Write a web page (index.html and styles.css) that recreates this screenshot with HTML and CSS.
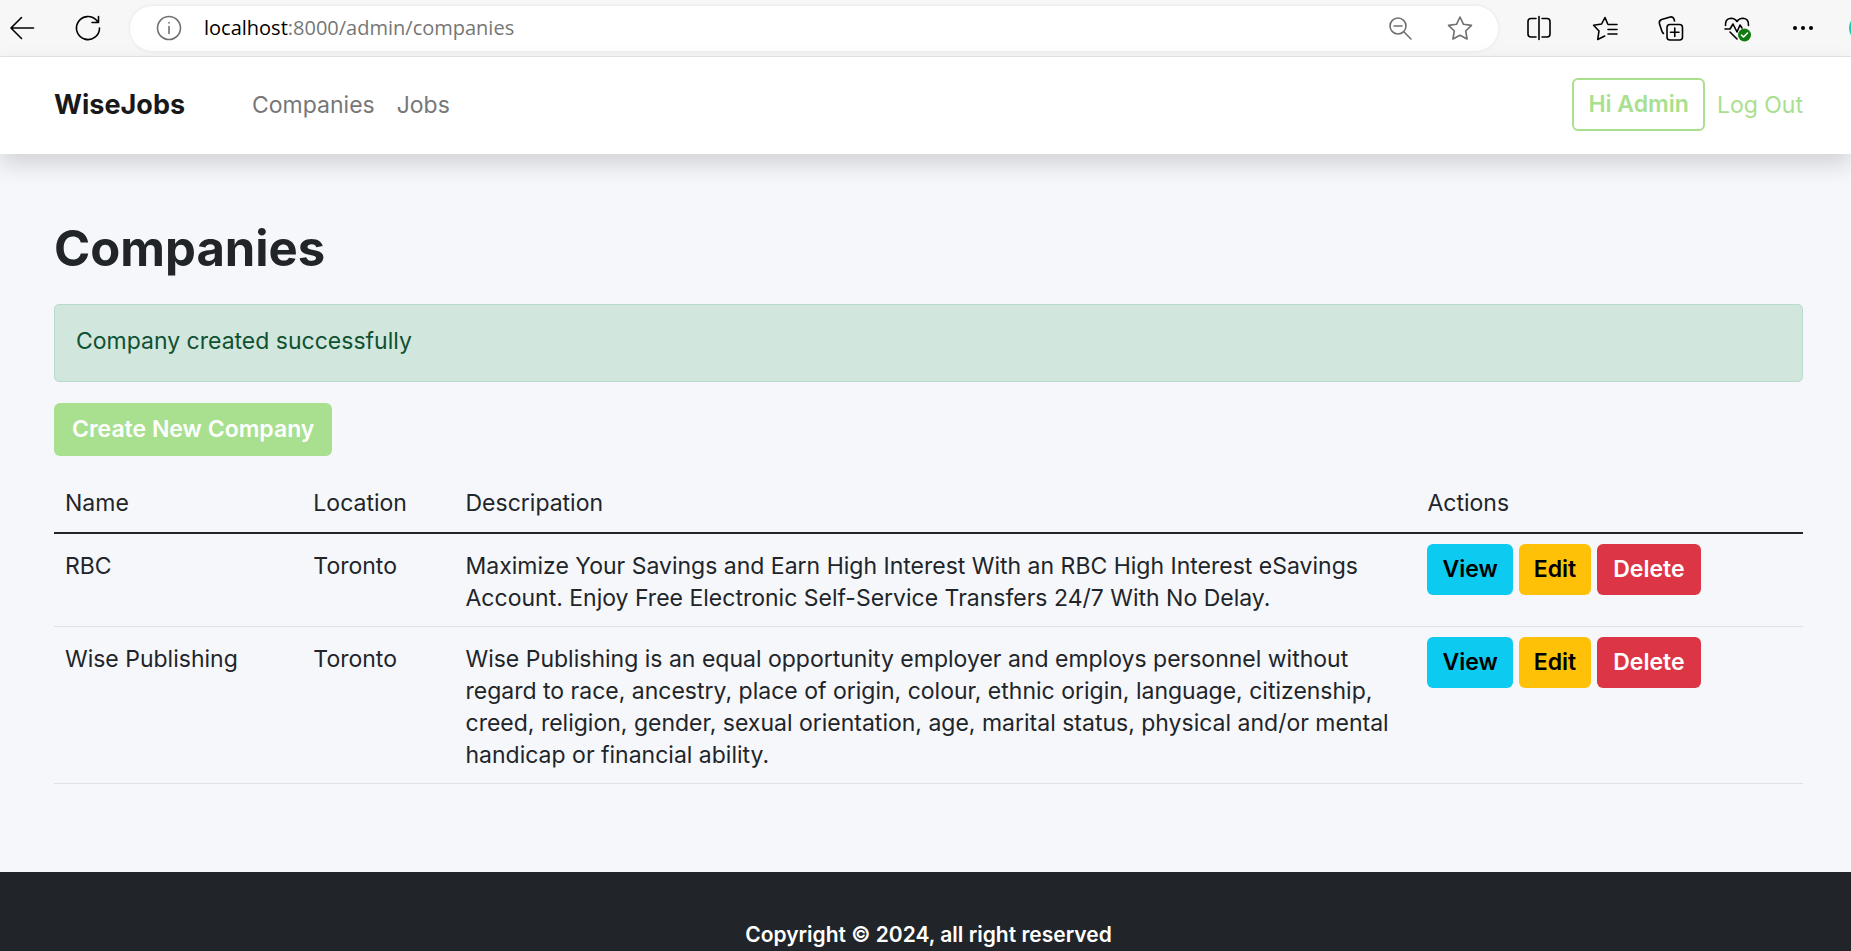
FILE: index.html
```html
<!DOCTYPE html>
<html lang="en">
<head>
<meta charset="utf-8">
<title>WiseJobs - Companies</title>
<link rel="stylesheet" href="styles.css">
</head>
<body>
<div class="browser-bar">
  <button class="icon-button" aria-label="Back"><svg class="icon" viewBox="0 0 28 28"><path d="M25.500 14H3M13.500 3.500L3 14l10.500 10.500"/></svg></button>
  <button class="icon-button icon-reload" aria-label="Reload"><svg class="icon" viewBox="0 0 28 28"><path d="M25.500 14A11.500 11.500 0 1 1 22.500 6.300L24 8M24.500 2.500V8.500H18"/></svg></button>
  <div class="address">
    <button class="icon-button icon-muted" aria-label="Site information"><svg class="icon" viewBox="0 0 28 28"><circle cx="14" cy="14" r="11.500"/><path d="M14 12.500v7M14 8.500v.5"/></svg></button>
    <div class="url"><span class="url-host">localhost</span>:8000/admin/companies</div>
    <button class="icon-button icon-muted" aria-label="Zoom out"><svg class="icon" viewBox="0 0 28 28"><circle cx="12" cy="12" r="8"/><path d="M8 12h8M18 18l7 7"/></svg></button>
    <button class="icon-button icon-muted icon-star" aria-label="Favorite"><svg class="icon" viewBox="0 0 28 28"><path d="M14 3l3.500 7.300 8 1.100-5.800 5.600 1.400 8-7.100-3.800L6.900 25l1.400-8-5.800-5.600 8-1.100z"/></svg></button>
  </div>
  <div class="tools">
    <button class="icon-button" aria-label="Split screen"><svg class="icon" viewBox="0 0 28 28"><path d="M14 2.500v23M11 4.500H6Q3 4.500 3 7.500v12.500q0 3 3 3h5M17 4.500H22q3 0 3 3v12.500q0 3-3 3h-5"/></svg></button>
    <button class="icon-button" aria-label="Favorites"><svg class="icon" viewBox="0 0 28 28"><path d="M16.500 9.500L14 3.500l-3.400 6.500-8 1.300 5.400 5.700-1.300 8.500 7-3.500M17 10.500h9M17 15.500h9M17 20h9"/></svg></button>
    <button class="icon-button" aria-label="Collections"><svg class="icon" viewBox="0 0 28 28"><rect x="10" y="10.500" width="15.500" height="15.500" rx="3"/><path d="M17.750 14v8.500M13.500 18.250H22M6.500 19.500Q5.200 18.500 4.500 16L2.400 9.500Q1.800 6.500 4.700 5.500l8.500-2.500q3-.5 3.800 2L17.500 7"/></svg></button>
    <button class="icon-button" aria-label="Browser essentials"><svg class="icon" viewBox="0 0 28 28"><path d="M2.500 11.500Q2 4.500 8 4.200q4 0 6 3.300 2-3.300 6-3.300 6 .5 5.500 7.300M2 15h5l3-5 4 8 3-7 2 3M7 18l7 7"/><circle class="badge" cx="21.500" cy="21" r="6.500"/><path class="badge-check" d="M18.500 21l2 2 4-4"/></svg></button>
    <button class="icon-button" aria-label="Menu"><svg class="icon icon-solid" viewBox="0 0 28 28"><circle cx="6" cy="14" r="2"/><circle cx="14" cy="14" r="2"/><circle cx="22" cy="14" r="2"/></svg></button>
  </div>
  <div class="profile"><span class="profile-disc"></span></div>
</div>
<header class="navbar">
  <a class="brand" href="#">WiseJobs</a>
  <nav class="nav-links">
    <a href="#">Companies</a>
    <a href="#">Jobs</a>
  </nav>
  <div class="account">
    <a class="btn btn-outline" href="#">Hi Admin</a>
    <a class="logout" href="#">Log Out</a>
  </div>
</header>
<main class="content">
  <h1>Companies</h1>
  <div class="alert" role="status">Company created successfully</div>
  <a class="btn btn-create" href="#">Create New Company</a>
  <table class="companies">
    <colgroup><col class="col-name"><col class="col-location"><col class="col-description"><col></colgroup>
    <thead>
      <tr><th>Name</th><th>Location</th><th>Descripation</th><th>Actions</th></tr>
    </thead>
    <tbody>
      <tr>
        <td>RBC</td>
        <td>Toronto</td>
        <td>Maximize Your Savings and Earn High Interest With an RBC High Interest eSavings Account. Enjoy Free Electronic Self-Service Transfers 24/7 With No Delay.</td>
        <td class="actions-cell"><div class="actions"><a class="btn btn-view" href="#">View</a><a class="btn btn-edit" href="#">Edit</a><button class="btn btn-delete">Delete</button></div></td>
      </tr>
      <tr>
        <td>Wise Publishing</td>
        <td>Toronto</td>
        <td>Wise Publishing is an equal opportunity employer and employs personnel without regard to race, ancestry, place of origin, colour, ethnic origin, language, citizenship, creed, religion, gender, sexual orientation, age, marital status, physical and/or mental handicap or financial ability.</td>
        <td class="actions-cell"><div class="actions"><a class="btn btn-view" href="#">View</a><a class="btn btn-edit" href="#">Edit</a><button class="btn btn-delete">Delete</button></div></td>
      </tr>
    </tbody>
  </table>
</main>
<footer class="footer">Copyright © 2024, all right reserved</footer>
</body>
</html>
```
FILE: styles.css
```css
* { box-sizing: border-box; }
html { height: 100%; }
body {
  margin: 0;
  height: 100%;
  display: flex;
  flex-direction: column;
  overflow: hidden;
  background: #f6f7fb;
  color: #212529;
  font: 400 23px/32px Inter, "Liberation Sans", sans-serif;
}
a { color: inherit; text-decoration: none; }

.browser-bar {
  flex: none;
  display: flex;
  align-items: center;
  height: 57px;
  padding-left: 8px;
  background: #f7f7f7;
  border-bottom: 1px solid #e5e5e5;
}
.icon-button {
  flex: none;
  display: flex;
  padding: 0;
  border: 0;
  background: none;
  color: #000;
}
.icon-reload { margin-left: 38px; }
.icon-muted { color: #707070; }
.icon {
  width: 28px;
  height: 28px;
  fill: none;
  stroke: currentColor;
  stroke-width: 1.6;
  stroke-linecap: round;
  stroke-linejoin: round;
}
.icon-solid { fill: currentColor; stroke: none; }
.badge { fill: #107c10; stroke: none; }
.badge-check { stroke: #fff; }
.address {
  flex: 1;
  display: flex;
  align-items: center;
  height: 45px;
  margin: 0 27px 0 28px;
  padding: 0 24px 0 25px;
  border-radius: 23px;
  background: #fff;
  box-shadow: 0 0 4px rgba(0, 0, 0, .08);
}
.url {
  flex: 1;
  margin-left: 21px;
  color: #767676;
  font-family: "Open Sans", "Noto Sans", sans-serif;
  font-size: 20px;
}
.url-host { color: #000; }
.icon-star { margin-left: 32px; }
.tools { display: flex; gap: 38px; }
.profile { width: 2px; margin-left: 32px; overflow: hidden; }
.profile-disc {
  display: block;
  width: 28px;
  height: 28px;
  border-radius: 50%;
  background: #1fc8b4;
}

.navbar {
  flex: none;
  display: flex;
  align-items: center;
  height: 97px;
  padding: 0 48px 2px 54px;
  background: #fff;
  box-shadow: 0 10px 22px rgba(0, 0, 0, .15);
}
.brand { color: #191919; font-size: 27px; font-weight: 700; }
.nav-links { display: flex; gap: 22px; margin-left: 67px; color: #777; }
.account {
  display: flex;
  align-items: center;
  gap: 12px;
  margin-left: auto;
  color: #a8e08f;
}

.btn {
  display: inline-block;
  padding: 8px 16px 9px;
  border: 2px solid transparent;
  border-radius: 6px;
  font: 600 23px/32px Inter, "Liberation Sans", sans-serif;
}
.btn-outline { padding: 8px 14px 9px; border-color: #a8e08f; }
.btn-create { background: #a8e08f; color: #fff; }
.btn-view { background: #0dcaf0; color: #000; }
.btn-edit { background: #ffc107; color: #000; }
.btn-delete { background: #dc3545; color: #fff; }

.content { flex: none; padding: 65px 48px 88px 54px; }
h1 { margin: 0 0 25px; font-size: 49px; line-height: 60px; font-weight: 700; }
.alert {
  margin-bottom: 21px;
  padding: 20px 21px 24px;
  border: 1px solid #badbcc;
  border-radius: 5px;
  background: #d1e7dd;
  color: #0f5132;
}
.companies {
  width: 100%;
  margin-top: 20px;
  border-collapse: separate;
  border-spacing: 0;
  table-layout: fixed;
}
.col-name { width: 14.2%; }
.col-location { width: 8.7%; }
.col-description { width: 55%; }
.companies th {
  padding: 11px 11px 13px;
  border-bottom: 2px solid #212529;
  text-align: left;
  font-weight: 400;
}
.companies td {
  padding: 16px 11px 12px;
  border-bottom: 1px solid #dee2e6;
  vertical-align: top;
}
.companies .actions-cell { padding-top: 10px; }
.actions { display: flex; gap: 6px; }
.actions .btn { padding: 7px 13px 8px; }
.actions .btn-delete { padding: 7px 14px 8px; }

.footer {
  flex: 1 0 auto;
  padding: 47px 48px 0 54px;
  background: #212529;
  color: #fff;
  font-size: 21px;
  font-weight: 600;
  text-align: center;
}
```
